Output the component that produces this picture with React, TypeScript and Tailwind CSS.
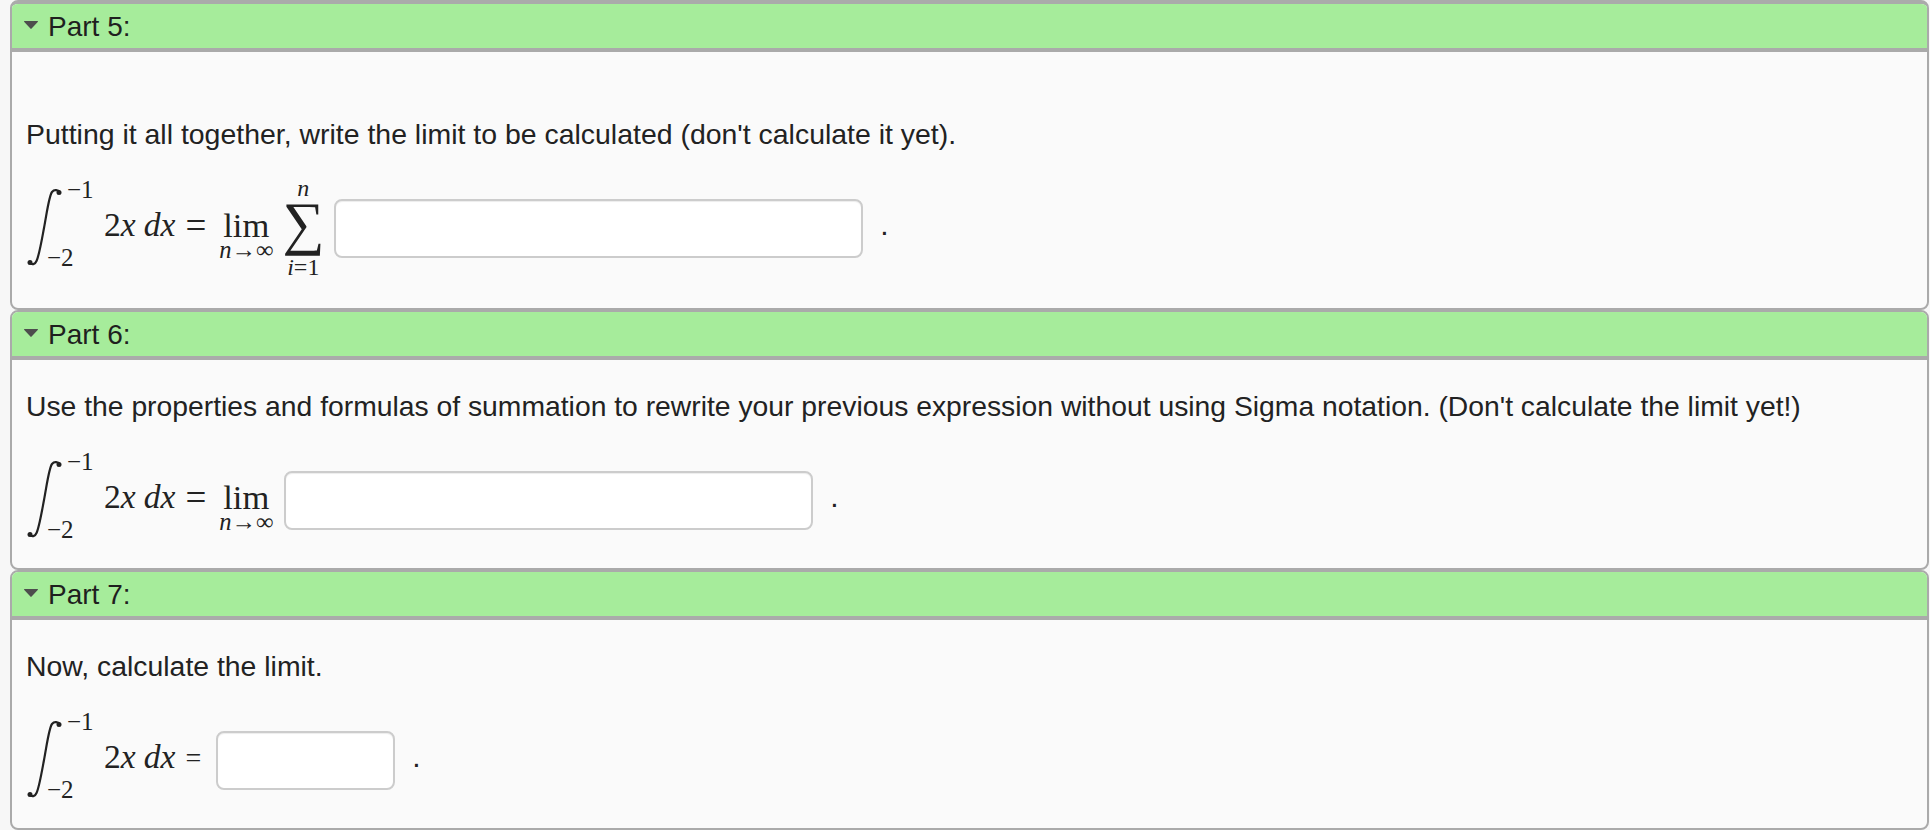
import React from 'react';

const Integral: React.FC = () => (
    <div className="flex w-[78px] shrink-0">
        <div className="w-[21px] h-[92px] pl-px pt-[6px]">
            <svg width="35" height="78" viewBox="0 0 35 78" className="overflow-visible">
                <path
                    d="M33 4.5C31 2 27.5 1 25 4C22 8 20 24 17 40C14 56 12 68 9.5 73C8 76.5 5 77 2.5 75"
                    fill="none"
                    stroke="#222"
                    strokeWidth="2.2"
                />
                <circle cx="32" cy="4.5" r="2.5" fill="#222" />
                <circle cx="3" cy="74.5" r="2.5" fill="#222" />
            </svg>
        </div>
        <div className="flex flex-col h-[92px] text-[25px] leading-[24px]">
            <span className="ml-[20px] -mt-[4px]">−1</span>
            <span className="mt-[44px]">−2</span>
        </div>
    </div>
);

const Integrand: React.FC = () => (
    <div className="mt-[23px] text-[33.6px] leading-[40px] whitespace-nowrap">
        2<i>x</i>
        <i className="ml-[8px]">dx</i>
    </div>
);

const Equals: React.FC = () => <span className="mt-[24px] ml-[10px] text-[37px] leading-[40px]">=</span>;

const Limit: React.FC = () => (
    <div className="flex flex-col items-center mt-[23px] ml-[12px] w-[56px]">
        <span className="text-[34.5px] leading-[40px]">lim</span>
        <span className="text-[24.5px] leading-[24px] -mt-[7px] whitespace-nowrap">
            <i>n</i>→∞
        </span>
    </div>
);

const Sum: React.FC = () => (
    <div className="flex flex-col items-center ml-[10px] w-[38px] -mt-[6px]">
        <i className="text-[24px] leading-[24px]">n</i>
        <span className="text-[59px] leading-[46px] mb-[9px]">∑</span>
        <span className="text-[24px] leading-[24px] whitespace-nowrap">
            <i>i</i>=1
        </span>
    </div>
);

const Answer: React.FC<{ width: string; left: string }> = ({ width, left }) => (
    <>
        <input type="text" className={`${width} ${left} h-[59px] mt-[17px] shrink-0 rounded-[8px] border-2 border-[#ccc] bg-white shadow-[inset_0_1px_1px_rgba(0,0,0,0.075)]`} />
        <span className="ml-[17px] mt-[23px] font-['Liberation_Sans',sans-serif] text-[30px] leading-[40px]">.</span>
    </>
);

const Part: React.FC<{
    title: string;
    text: string;
    textSize: string;
    outer: string;
    body: string;
    children: React.ReactNode;
}> = ({ title, text, textSize, outer, body, children }) => (
    <section className={`${outer} border-x-2 border-b-2 border-[#aaa] rounded-[8px] overflow-hidden bg-[#fafafa]`}>
        <div className="flex items-center h-[44px] bg-[#a6ec9b] text-[28px] pl-[12px]">
            <svg width="14" height="8" viewBox="0 0 14 8" className="-mt-[2px]">
                <path d="M0.5 0H13.5C14 0 14 .6 13.7 1L7.6 7.6C7.2 8 6.8 8 6.4 7.6L.3 1C0 .6 0 0 .5 0Z" fill="#4d4d4d" />
            </svg>
            <span className="ml-[10px] text-[#1f1f1f] leading-[44px] mt-[1px]">{title}</span>
        </div>
        <div className={`${body} border-t-4 border-[#aaa] px-[14px] text-[#222]`}>
            <p className={`${textSize} -mt-px leading-[40px] whitespace-nowrap`}>{text}</p>
            <div className="flex items-start h-[92px] mt-[28px] font-['Liberation_Serif',serif]">{children}</div>
        </div>
    </section>
);

const App: React.FC = () => {
    return (
        <div className="h-[830px] w-full overflow-hidden bg-[#f7f7f7] pl-[10px] pr-px font-['Liberation_Sans',sans-serif]">
            <Part
                title="Part 5:"
                text="Putting it all together, write the limit to be calculated (don't calculate it yet)."
                textSize="text-[28.45px]"
                outer="h-[310px] border-t-4"
                body="pt-[63px] pb-[34px]"
            >
                <Integral />
                <Integrand />
                <Equals />
                <Limit />
                <Sum />
                <Answer width="w-[529px]" left="ml-[12px]" />
            </Part>
            <Part
                title="Part 6:"
                text="Use the properties and formulas of summation to rewrite your previous expression without using Sigma notation. (Don't calculate the limit yet!)"
                textSize="text-[28.3px]"
                outer="h-[260px] border-t-2"
                body="pt-[27px] pb-[22px]"
            >
                <Integral />
                <Integrand />
                <Equals />
                <Limit />
                <Answer width="w-[529px]" left="ml-[10px]" />
            </Part>
            <Part
                title="Part 7:"
                text="Now, calculate the limit."
                textSize="text-[28.4px]"
                outer="h-[260px] border-t-2"
                body="pt-[27px] pb-[22px]"
            >
                <Integral />
                <Integrand />
                <span className="mt-[24px] ml-[10px] text-[28px] leading-[40px]">=</span>
                <Answer width="w-[179px]" left="ml-[15px]" />
            </Part>
        </div>
    );
};

export default App;
